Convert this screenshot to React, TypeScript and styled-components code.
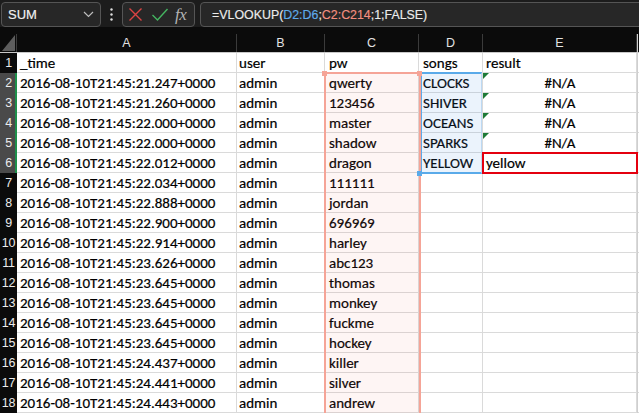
import React from "react";
import styled, { createGlobalStyle } from "styled-components";

const GlobalStyle = createGlobalStyle`
  html, body { margin: 0; padding: 0; background: #1f1f1f; }
  body {
    width: 639px; height: 413px; overflow: hidden;
    font-family: "Liberation Sans", Arial, sans-serif;
  }
  * { box-sizing: border-box; }
`;

const COLS = "17px 220px 88px 94px 64px 154px 1fr";

const Page = styled.div`
  display: flex;
  flex-direction: column;
  width: 639px;
  height: 413px;
  overflow: hidden;
`;

const FormulaBar = styled.div`
  display: flex;
  align-items: flex-start;
  height: 28px;
  padding: 2px 0 0 1px;
  background: #1c1c1c;
  overflow: hidden;
`;

const Box = styled.div`
  display: flex;
  align-items: center;
  height: 25px;
  background: #272727;
  border: 1px solid #555;
  border-radius: 4px;
`;

const NameBox = styled(Box)`
  width: 100px;
  justify-content: space-between;
  padding: 0 6px 0 6px;
  color: #f2f2f2;
  font-size: 13px;
  -webkit-text-stroke: 0.15px #f2f2f2;
`;

const DotsWrap = styled.div`
  width: 21px;
  height: 25px;
  display: flex;
  align-items: center;
  justify-content: center;
`;

const ActionBox = styled(Box)`
  width: 73px;
  padding: 0 0 0 5px;
`;

const Fx = styled.span`
  font-family: "Liberation Serif", "Times New Roman", serif;
  font-style: italic;
  font-size: 17px;
  color: #b3b3b3;
  margin-left: 6px;
  letter-spacing: -0.5px;
`;

const FormulaBox = styled(Box)`
  flex: 1;
  margin: 0 -10px 0 5px;
  padding-left: 11px;
  font-size: 12.4px;
  color: #ececec;
  white-space: nowrap;
  -webkit-text-stroke: 0.15px currentColor;
`;

const Ref = styled.span<{ $c: string }>`
  color: ${(p) => p.$c};
`;

const Sheet = styled.div`
  position: relative;
  flex: 1;
  background: #0b0b0b;
`;

const HeaderRow = styled.div`
  display: grid;
  grid-template-columns: ${COLS};
  height: 26px;
  padding-top: 7px;
  background: #0b0b0b;
  border-bottom: 1px solid #c9c9c9;
`;

const Corner = styled.div`
  position: relative;
  height: 18px;
  border-right: 1px solid #3b3b3b;
`;

const CornerTri = styled.svg`
  position: absolute;
  left: 1px;
  top: 0px;
`;

const ColHead = styled.div`
  height: 18px;
  line-height: 18px;
  text-align: center;
  color: #e2e2e2;
  font-size: 12.5px;
  border-right: 1px solid #3b3b3b;
`;

const Row = styled.div`
  display: grid;
  grid-template-columns: ${COLS};
  height: 20px;
`;

const RowHead = styled.div<{ $sel?: boolean }>`
  height: 20px;
  line-height: 20px;
  text-align: center;
  font-size: 12.5px;
  color: #ececec;
  background: ${(p) => (p.$sel ? "#4a4a4a" : "#0b0b0b")};
  box-shadow: ${(p) => (p.$sel ? "inset -2px 0 #1f8f4a" : "none")};
  letter-spacing: -0.3px;
  overflow: hidden;
`;

const Cell = styled.div<{ $align?: string; $flag?: boolean; $edit?: boolean; $pad?: number }>`
  position: relative;
  height: 20px;
  padding: 1px 2px 0 ${(p) => p.$pad ?? 3}px;
  line-height: 19px;
  font-family: "Carlito", "Liberation Sans", Arial, sans-serif;
  font-size: 15px;
  color: #000;
  -webkit-text-stroke: 0.2px #000;
  background: #fff;
  border-right: 1px solid #dadada;
  border-bottom: 1px solid #dadada;
  white-space: nowrap;
  overflow: ${(p) => (p.$edit ? "visible" : "hidden")};
  text-align: ${(p) => p.$align ?? "left"};
  ${(p) =>
    p.$edit
      ? `outline: 2px solid #e4000f; outline-offset: -1px; z-index: 3;`
      : ""}
  ${(p) =>
    p.$flag
      ? `&::before {
          content: "";
          position: absolute;
          left: 0; top: 0;
          border-top: 6px solid #1d7a36;
          border-right: 6px solid transparent;
        }`
      : ""}
`;

const Range = styled.div<{ $color: string; $fill: string }>`
  position: absolute;
  border: 2px solid ${(p) => p.$color};
  background: ${(p) => p.$fill};
  pointer-events: none;
  z-index: 1;
`;

const Handle = styled.div<{ $color: string }>`
  position: absolute;
  width: 5px;
  height: 5px;
  background: ${(p) => p.$color};
  z-index: 2;
`;

const EdgeBar = styled.div`
  position: absolute;
  right: 1px;
  top: 7px;
  bottom: 0;
  width: 1px;
  background: #cfcfcf;
  z-index: 1;
`;

type RowData = [string, string, string, string, string];

const rows: RowData[] = [
  ["_time", "user", "pw", "songs", "result"],
  ["2016-08-10T21:45:21.247+0000", "admin", "qwerty", "CLOCKS", "#N/A"],
  ["2016-08-10T21:45:21.260+0000", "admin", "123456", "SHIVER", "#N/A"],
  ["2016-08-10T21:45:22.000+0000", "admin", "master", "OCEANS", "#N/A"],
  ["2016-08-10T21:45:22.000+0000", "admin", "shadow", "SPARKS", "#N/A"],
  ["2016-08-10T21:45:22.012+0000", "admin", "dragon", "YELLOW", "yellow"],
  ["2016-08-10T21:45:22.034+0000", "admin", "111111", "", ""],
  ["2016-08-10T21:45:22.888+0000", "admin", "jordan", "", ""],
  ["2016-08-10T21:45:22.900+0000", "admin", "696969", "", ""],
  ["2016-08-10T21:45:22.914+0000", "admin", "harley", "", ""],
  ["2016-08-10T21:45:23.626+0000", "admin", "abc123", "", ""],
  ["2016-08-10T21:45:23.645+0000", "admin", "thomas", "", ""],
  ["2016-08-10T21:45:23.645+0000", "admin", "monkey", "", ""],
  ["2016-08-10T21:45:23.645+0000", "admin", "fuckme", "", ""],
  ["2016-08-10T21:45:23.645+0000", "admin", "hockey", "", ""],
  ["2016-08-10T21:45:24.437+0000", "admin", "killer", "", ""],
  ["2016-08-10T21:45:24.441+0000", "admin", "silver", "", ""],
  ["2016-08-10T21:45:24.443+0000", "admin", "andrew", "", ""],
];

const SALMON = "#f5a497";
const BLUE = "#5aaae9";

export default function App() {
  return (
    <>
      <GlobalStyle />
      <Page>
        <FormulaBar>
          <NameBox>
            <span>SUM</span>
            <svg width="11" height="7" viewBox="0 0 11 7">
              <path d="M1 1l4.5 4.5L10 1" fill="none" stroke="#bdbdbd" strokeWidth="1.2" />
            </svg>
          </NameBox>
          <DotsWrap>
            <svg width="3" height="13" viewBox="0 0 3 13">
              <circle cx="1.5" cy="1.5" r="1.2" fill="#dedede" />
              <circle cx="1.5" cy="6.5" r="1.2" fill="#dedede" />
              <circle cx="1.5" cy="11.5" r="1.2" fill="#dedede" />
            </svg>
          </DotsWrap>
          <ActionBox>
            <svg width="15" height="15" viewBox="0 0 15 15">
              <path d="M1.5 1.5l12 12M13.5 1.5l-12 12" stroke="#dd4343" strokeWidth="1.4" />
            </svg>
            <svg width="18" height="15" viewBox="0 0 18 15" style={{ marginLeft: 8 }}>
              <path d="M1.5 8l5 5L16.5 2" fill="none" stroke="#45b561" strokeWidth="1.4" />
            </svg>
            <Fx>fx</Fx>
          </ActionBox>
          <FormulaBox>
            =VLOOKUP(<Ref $c="#5fabeb">D2:D6</Ref>;<Ref $c="#f48f80">C2:C214</Ref>;1;FALSE)
          </FormulaBox>
        </FormulaBar>
        <Sheet>
          <HeaderRow>
            <Corner>
              <CornerTri width="15" height="18" viewBox="0 0 15 18">
                <polygon points="14,1 14,17 1,17" fill="#5d5d5d" />
              </CornerTri>
            </Corner>
            {["A", "B", "C", "D", "E"].map((c) => (
              <ColHead key={c}>{c}</ColHead>
            ))}
            <div />
          </HeaderRow>
          {rows.map((r, i) => {
            const n = i + 1;
            return (
              <Row key={n}>
                <RowHead $sel={n >= 2 && n <= 6}>{n}</RowHead>
                <Cell>{r[0]}</Cell>
                <Cell $pad={2}>{r[1]}</Cell>
                <Cell $pad={4}>{r[2]}</Cell>
                <Cell $pad={4}>{r[3]}</Cell>
                <Cell
                  $align={r[4] === "#N/A" ? "center" : "left"}
                  $flag={r[4] === "#N/A"}
                  $edit={n === 6}
                >
                  {r[4]}
                </Cell>
                <Cell />
              </Row>
            );
          })}
          <Range $color={BLUE} $fill="rgba(70,150,225,0.11)" style={{ left: 420, top: 45, width: 62, height: 102, borderRightColor: "#bcd9f3", borderRightWidth: 1 }} />
          <Range $color={SALMON} $fill="rgba(245,120,100,0.07)" style={{ left: 324, top: 45, width: 97, height: 400 }} />
          <Handle $color={SALMON} style={{ left: 322, top: 44 }} />
          <Handle $color={SALMON} style={{ left: 417, top: 44 }} />
          <Handle $color={BLUE} style={{ left: 417, top: 144 }} />
          <EdgeBar />
        </Sheet>
      </Page>
    </>
  );
}
